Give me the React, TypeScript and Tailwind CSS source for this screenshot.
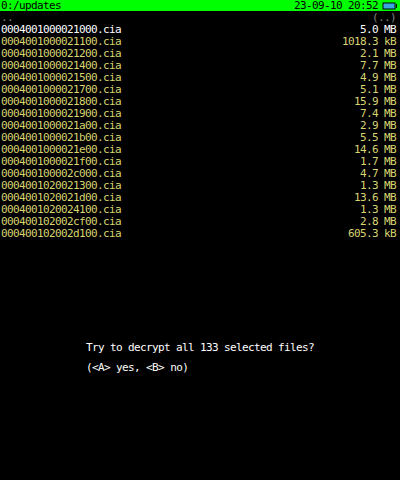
const files: [string, string][] = [
  ["0004001000021000.cia", "5.0 MB"],
  ["0004001000021100.cia", "1018.3 kB"],
  ["0004001000021200.cia", "2.1 MB"],
  ["0004001000021400.cia", "7.7 MB"],
  ["0004001000021500.cia", "4.9 MB"],
  ["0004001000021700.cia", "5.1 MB"],
  ["0004001000021800.cia", "15.9 MB"],
  ["0004001000021900.cia", "7.4 MB"],
  ["0004001000021a00.cia", "2.9 MB"],
  ["0004001000021b00.cia", "5.5 MB"],
  ["0004001000021e00.cia", "14.6 MB"],
  ["0004001000021f00.cia", "1.7 MB"],
  ["000400100002c000.cia", "4.7 MB"],
  ["0004001020021300.cia", "1.3 MB"],
  ["0004001020021d00.cia", "13.6 MB"],
  ["0004001020024100.cia", "1.3 MB"],
  ["000400102002cf00.cia", "2.8 MB"],
  ["000400102002d100.cia", "605.3 kB"],
];

function Battery() {
  return (
    <svg width="15" height="8" viewBox="0 0 15 8" className="block">
      <rect x="0.5" y="0.5" width="13" height="7" fill="#000" />
      <rect x="1.5" y="1.5" width="11" height="5" fill="#3aa8e0" />
      <rect x="14" y="2" width="1" height="4" fill="#000" />
    </svg>
  );
}

export default function App() {
  return (
    <div
      className="w-[400px] h-[480px] bg-black flex flex-col text-[11px] tracking-[-0.62px]"
      style={{ fontFamily: '"DejaVu Sans Mono", "Liberation Mono", monospace' }}
    >
      <div className="h-[240px] flex flex-col">
        <div className="h-[11px] bg-[#00ff00] text-black leading-[11px] flex items-center justify-between pl-[1px] pr-[3px]">
          <span>0:/updates</span>
          <div className="flex items-center gap-[4px]">
            <span>23-09-10 20:52</span>
            <Battery />
          </div>
        </div>
        <div className="mt-[1px] flex flex-col leading-[12px] pl-[1px] pr-[4px]">
          <div className="flex justify-between text-[#808080]">
            <span>..</span>
            <span>(..)</span>
          </div>
          {files.map(([name, size], i) => (
            <div
              key={name}
              className={
                "flex justify-between " + (i === 0 ? "text-white" : "text-[#d8d470]")
              }
            >
              <span>{name}</span>
              <span>{size}</span>
            </div>
          ))}
        </div>
      </div>
      <div className="h-[240px] pt-[98px] pl-[86px] text-white leading-[20px]">
        <div>Try to decrypt all 133 selected files?</div>
        <div>({"<"}A{">"} yes, {"<"}B{">"} no)</div>
      </div>
    </div>
  );
}
